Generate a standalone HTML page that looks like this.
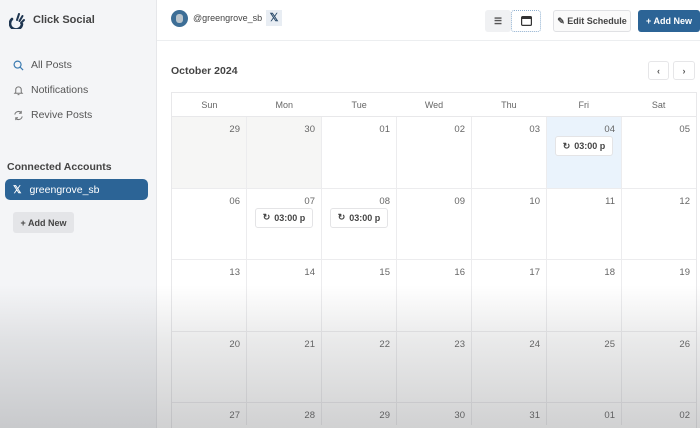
<!DOCTYPE html>
<html style="width:700px;height:428px;overflow:hidden"><head><style>
*{box-sizing:border-box;margin:0;padding:0}
body{width:700px;height:428px;overflow:hidden;background:#fff;font-family:"Liberation Sans",sans-serif;position:relative;color:#333}
.side{position:absolute;left:0;top:0;width:157px;height:428px;background:#f4f5f7;border-right:1px solid #e6e7ea}
.logo{position:absolute;left:9px;top:11px;font-size:11px;font-weight:bold;color:#444;display:flex;align-items:center;gap:6px}
.nav{position:absolute;left:13px;font-size:10.5px;color:#555;display:flex;align-items:center;gap:7px}
.conn{position:absolute;left:7px;top:161px;font-size:10.5px;font-weight:bold;color:#444}
.acc{position:absolute;left:5px;top:179px;width:143px;height:21px;background:#2c6496;border-radius:5px;color:#fff;font-size:10.5px;display:flex;align-items:center;padding-left:8px;gap:8px}
.addside{position:absolute;left:13px;top:212px;width:61px;height:21px;background:#e4e5e8;border-radius:3px;font-size:9px;color:#444;display:flex;align-items:center;justify-content:center;font-weight:bold}
.top{position:absolute;left:157px;top:0;right:0;height:41px;border-bottom:1px solid #eceef0;background:#fff}
.btn{position:absolute;height:22px;border-radius:3px;font-size:9px;font-weight:bold;display:flex;align-items:center;justify-content:center}
.cal{position:absolute;left:171px;top:92px;width:526px;border:1px solid #e8e8ea;border-bottom:none;height:336px;overflow:hidden}
.hd{display:flex;height:24px;border-bottom:1px solid #e8e8ea}
.hd div{flex:1;text-align:center;font-size:9px;color:#666;line-height:24px}
.row{display:flex;height:71.5px;border-bottom:1px solid #ececee}
.row.last{height:22px;border-bottom:none}
.row div{flex:1;border-right:1px solid #ececee;text-align:right;font-size:9.5px;color:#666;padding:7px 6px 0 0;position:relative}
.row div:last-child{border-right:none}
.ev{position:absolute;left:8px;top:19px;width:58px;height:20px;border:1px solid #e4e4e6;border-radius:3px;background:#fff;font-size:9px;font-weight:bold;color:#444;display:flex;align-items:center;justify-content:center;gap:4px}
.shade{position:absolute;left:0;top:0;width:700px;height:428px;background:linear-gradient(to bottom,rgba(0,0,0,0) 0,rgba(0,0,0,0) 285px,rgba(90,92,96,.13) 340px,rgba(70,72,76,.25) 428px);pointer-events:none}
</style></head><body>
<div class="side">
 <div class="logo"><svg width="18" height="18" viewBox="0 0 18 18"><path d="M3 8a6 6 0 1 0 10 5" stroke="#1e3550" stroke-width="2.6" fill="none" stroke-linecap="round"/><path d="M8 9l2-6M10.5 10l3-5M12 12l3-3" stroke="#1e3550" stroke-width="2" stroke-linecap="round"/></svg>Click Social</div>
 <div class="nav" style="top:59px"><svg width="11" height="11" viewBox="0 0 12 12"><circle cx="5" cy="5" r="3.8" stroke="#3a7ab0" stroke-width="1.3" fill="none"/><path d="M8 8l3 3" stroke="#3a7ab0" stroke-width="1.3"/></svg>All Posts</div>
 <div class="nav" style="top:84px"><svg width="11" height="11" viewBox="0 0 12 12"><path d="M3 8V5a3 3 0 0 1 6 0v3l1 1H2z M5 10.5h2" stroke="#777" stroke-width="1.1" fill="none"/></svg>Notifications</div>
 <div class="nav" style="top:109px"><svg width="11" height="11" viewBox="0 0 12 12"><path d="M2 5a4 4 0 0 1 7-2M10 7a4 4 0 0 1-7 2M9 1v2.5H6.5M3 11V8.5h2.5" stroke="#777" stroke-width="1.1" fill="none"/></svg>Revive Posts</div>
 <div class="conn">Connected Accounts</div>
 <div class="acc"><span style="font-weight:bold">𝕏</span>greengrove_sb</div>
 <div class="addside">+ Add New</div>
</div>
<div class="top">
 <div style="position:absolute;left:14px;top:10px;width:17px;height:17px;border-radius:50%;background:#3d6e96"><div style="margin:4px 5px;width:7px;height:9px;background:#b9c4cc;border-radius:3px"></div></div>
 <div style="position:absolute;left:36px;top:13px;font-size:9px;color:#444">@greengrove_sb</div>
 <div style="position:absolute;left:109px;top:10px;width:16px;height:16px;background:#e8edf3;font-size:11px;text-align:center;line-height:16px;color:#2a4a6a;font-weight:bold">𝕏</div>
 <div class="btn" style="left:328px;top:10px;width:26px;background:#f0f1f3;color:#555">☰</div>
 <div class="btn" style="left:354px;top:10px;width:30px;border:1px dotted #8fb0d0;background:#fff"><svg width="11" height="10" viewBox="0 0 11 10"><rect x=".6" y=".6" width="9.8" height="8.8" rx="1" stroke="#333" fill="none" stroke-width="1.2"/><rect x=".6" y=".6" width="9.8" height="2.4" fill="#333"/></svg></div>
 <div class="btn" style="left:396px;top:10px;width:78px;border:1px solid #e0e1e4;color:#444;background:#fafafa">✎ Edit Schedule</div>
 <div class="btn" style="left:481px;top:10px;width:62px;background:#2c6496;color:#fff">+ Add New</div>
</div>
<div style="position:absolute;left:171px;top:65px;font-size:10.5px;font-weight:bold;color:#444">October 2024</div>
<div class="btn" style="left:648px;top:61px;width:21px;height:19px;border:1px solid #e6e6e8;color:#555;font-size:9px">‹</div>
<div class="btn" style="left:673px;top:61px;width:22px;height:19px;border:1px solid #e6e6e8;color:#555;font-size:9px">›</div>
<div class="cal">
 <div class="hd"><div>Sun</div><div>Mon</div><div>Tue</div><div>Wed</div><div>Thu</div><div>Fri</div><div>Sat</div></div>
 <div class="row"><div style="background:#f6f6f5">29</div><div style="background:#f6f6f5">30</div><div>01</div><div>02</div><div>03</div><div style="background:#eaf3fc">04<span class="ev"><span>↻</span>03:00 p</span></div><div>05</div></div>
 <div class="row"><div>06</div><div>07<span class="ev"><span>↻</span>03:00 p</span></div><div>08<span class="ev"><span>↻</span>03:00 p</span></div><div>09</div><div>10</div><div>11</div><div>12</div></div>
 <div class="row"><div>13</div><div>14</div><div>15</div><div>16</div><div>17</div><div>18</div><div>19</div></div>
 <div class="row"><div>20</div><div>21</div><div>22</div><div>23</div><div>24</div><div>25</div><div>26</div></div>
 <div class="row last"><div>27</div><div>28</div><div>29</div><div>30</div><div>31</div><div>01</div><div>02</div></div>
</div>
<div class="shade"></div>
</body></html>
